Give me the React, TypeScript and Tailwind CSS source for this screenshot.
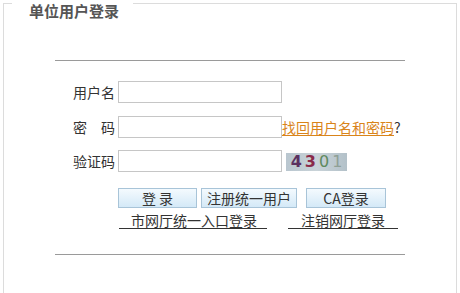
import React from "react";

function Row({ label, children }: { label: React.ReactNode; children?: React.ReactNode }) {
  return (
    <div className="flex items-center h-[22px]">
      <div className="w-[42px] text-[14px] leading-[16px] text-[#333]">{label}</div>
      <input className="ml-[3px] w-[164px] h-[22px] border border-[#c6c6c6] bg-white outline-none" />
      {children}
    </div>
  );
}

function Btn({ w, children, ml }: { w: string; children: React.ReactNode; ml: string }) {
  return (
    <button
      className={`${w} ${ml} h-[20px] border border-[#a8c4d8] bg-gradient-to-b from-[#f4fafe] to-[#d4e9f7] text-[14px] leading-[16px] text-[#333] flex items-center justify-center`}
    >
      {children}
    </button>
  );
}

export default function App() {
  return (
    <div className="w-[460px] h-[293px] overflow-hidden bg-white font-['Noto_Sans_CJK_SC','Noto_Sans',sans-serif]">
      <div className="pt-[3px] pl-[3px] pr-[3px]">
        <div className="relative border border-[#dcdcdc] h-[330px]">
          <span className="absolute left-[8px] top-[-2px] bg-white pl-[17px] pr-[14px] text-[15px] leading-[17px] font-bold text-[#555]">
            单位用户登录
          </span>
          <div className="mt-[56px] mx-auto w-[350px] border-t border-[#9a9a9a]" />
          <div className="pl-[69px] flex flex-col">
            <div className="mt-[20px]">
              <Row label="用户名" />
            </div>
            <div className="mt-[13px]">
              <Row
                label={
                  <span className="flex justify-between">
                    <span>密</span>
                    <span>码</span>
                  </span>
                }
              >
                <span className="text-[14px] leading-[16px] text-[#d9841a] underline underline-offset-2">
                  找回用户名和密码
                </span>
                <span className="text-[14px] leading-[16px] text-[#333]">?</span>
              </Row>
            </div>
            <div className="mt-[12px]">
              <Row label="验证码">
                <div className="ml-[4px] mt-[2px] w-[61px] h-[18px] bg-gradient-to-r from-[#b9c6cf] via-[#c9d3d8] to-[#b3c1c9] flex items-center justify-center gap-[3px] text-[16px] leading-[16px] font-bold font-['DejaVu_Sans',sans-serif]">
                  <span className="text-[#5b3160]">4</span>
                  <span className="text-[#8a2a4a]">3</span>
                  <span className="text-[#5f8a5f] font-normal">0</span>
                  <span className="text-[#8fa096] font-normal">1</span>
                </div>
              </Row>
            </div>
            <div className="mt-[16px] flex pl-[45px]">
              <Btn w="w-[79px]" ml="ml-0">登 录</Btn>
              <Btn w="w-[96px]" ml="ml-[4px]">注册统一用户</Btn>
              <Btn w="w-[80px]" ml="ml-[9px]">CA登录</Btn>
            </div>
            <div className="mt-[4px] flex pl-[46px] text-[14px] leading-[16px] text-[#333]">
              <span className="pl-[12px] pr-[10px] border-b border-[#333]">市网厅统一入口登录</span>
              <span className="ml-[21px] pl-[13px] pr-[13px] border-b border-[#333]">注销网厅登录</span>
            </div>
          </div>
          <div className="mt-[25px] mx-auto w-[350px] border-t border-[#9a9a9a]" />
        </div>
      </div>
    </div>
  );
}
